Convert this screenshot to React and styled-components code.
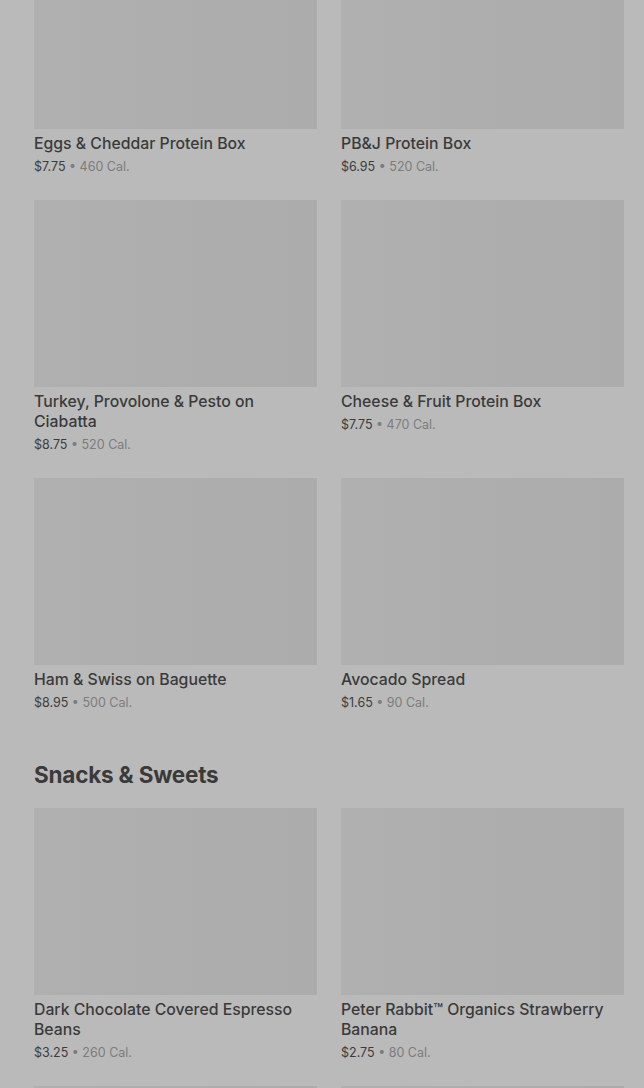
import styled, { createGlobalStyle } from 'styled-components'

const Global = createGlobalStyle`
  html, body {
    margin: 0;
    padding: 0;
    background: #bababa;
  }
  body {
    font-family: Inter, "Noto Sans", "Liberation Sans", sans-serif;
    overflow: hidden;
  }
`

const Page = styled.div`
  width: 644px;
  padding: 0 20px 0 34px;
  box-sizing: border-box;
  margin-top: -58px;
`

const Section = styled.section`
  display: flex;
  flex-direction: column;
`

const Heading = styled.h2`
  margin: 49px 0 19px;
  font-size: 22.5px;
  line-height: 28px;
  font-weight: 700;
  color: #3a3a3a;
  letter-spacing: -0.2px;
`

const Grid = styled.div`
  display: grid;
  grid-template-columns: 283px 283px;
  column-gap: 24px;
  row-gap: 24px;
`

const Card = styled.div`
  display: flex;
  flex-direction: column;
`

const Thumb = styled.div`
  height: 187px;
  background: linear-gradient(90deg, #b0b0b0 0%, #adadad 60%, #acacac 100%);
`

const Name = styled.div`
  margin-top: 5px;
  font-size: 15.8px;
  line-height: 20px;
  font-weight: 500;
  color: #3a3a3a;
`

const Meta = styled.div`
  margin-top: 4px;
  font-size: 12.5px;
  line-height: 18px;
  color: #3c3c3c;
`

const Cal = styled.span`
  color: #7c7c7c;
`

const food = [
  ['Eggs & Cheddar Protein Box', '$7.75', '460 Cal.'],
  ['PB&J Protein Box', '$6.95', '520 Cal.'],
  ['Turkey, Provolone & Pesto on Ciabatta', '$8.75', '520 Cal.'],
  ['Cheese & Fruit Protein Box', '$7.75', '470 Cal.'],
  ['Ham & Swiss on Baguette', '$8.95', '500 Cal.'],
  ['Avocado Spread', '$1.65', '90 Cal.'],
]

const snacks = [
  ['Dark Chocolate Covered Espresso Beans', '$3.25', '260 Cal.'],
  ['Peter Rabbit\u2122 Organics Strawberry Banana', '$2.75', '80 Cal.'],
  ['', '', ''],
  ['', '', ''],
]

const Item = ({ name, price, cal }) => (
  <Card>
    <Thumb />
    {name && <Name>{name}</Name>}
    {price && (
      <Meta>
        {price} <Cal>• {cal}</Cal>
      </Meta>
    )}
  </Card>
)

const App = () => {
  return (
    <>
      <Global />
      <Page>
        <Section>
          <Grid>
            {food.map(([n, p, c]) => (
              <Item key={n} name={n} price={p} cal={c} />
            ))}
          </Grid>
        </Section>
        <Section>
          <Heading>Snacks &amp; Sweets</Heading>
          <Grid>
            {snacks.map(([n, p, c], i) => (
              <Item key={i} name={n} price={p} cal={c} />
            ))}
          </Grid>
        </Section>
      </Page>
    </>
  )
}

export default App
